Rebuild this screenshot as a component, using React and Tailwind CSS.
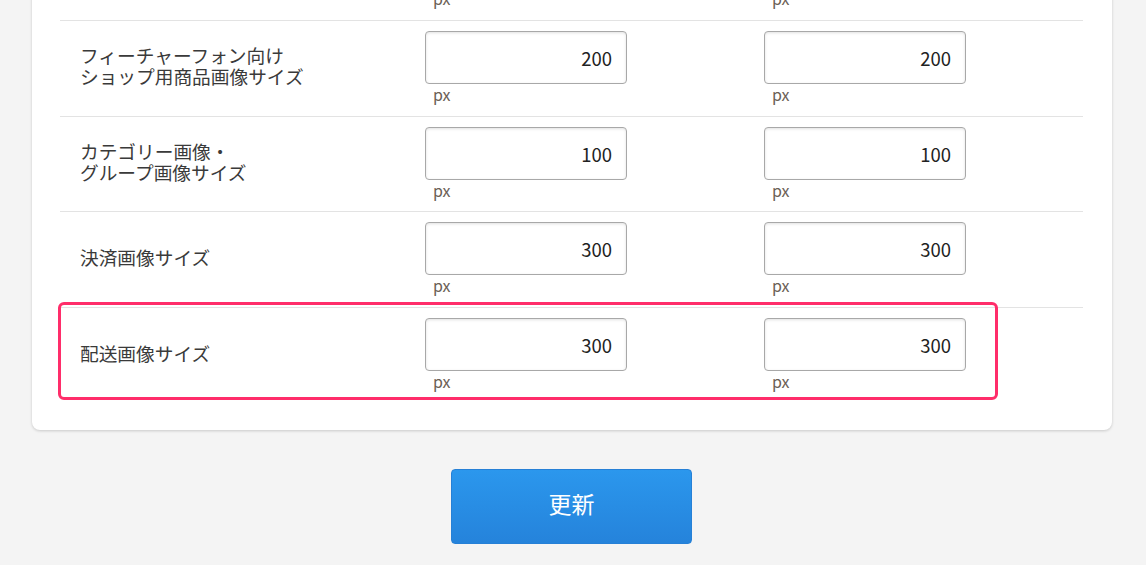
import React from 'react';

const rows = [
  { label: ['スマートフォン向け', 'ショップ用商品画像サイズ'], w: '300', h: '300' },
  { label: ['フィーチャーフォン向け', 'ショップ用商品画像サイズ'], w: '200', h: '200' },
  { label: ['カテゴリー画像・', 'グループ画像サイズ'], w: '100', h: '100', tight: true },
  { label: ['決済画像サイズ'], w: '300', h: '300' },
  { label: ['配送画像サイズ'], w: '300', h: '300', marked: true },
];

const SizeInput = ({ value }) => (
  <div className="flex flex-col">
    <input
      type="text"
      defaultValue={value}
      className="w-[202px] h-[53px] border border-[#a8a8a8] rounded-[4px] bg-white text-right pr-[14px] text-[18.5px] text-[#222] shadow-[inset_0_1px_3px_rgba(0,0,0,0.12)] outline-none"
    />
    <span className="pl-[8px] h-[20px] leading-[20px] text-[16px] text-[#6b6055]">px</span>
  </div>
);

const App = () => {
  return (
    <div
      className="w-full h-[565px] overflow-hidden bg-[#f4f4f4] text-[#333]"
      style={{ fontFamily: '"Noto Sans CJK JP", "Noto Sans", sans-serif' }}
    >
      <div className="mx-[32px] w-[1080px] -mt-[76px] bg-white rounded-b-[8px] shadow-[0_1px_3px_rgba(0,0,0,0.18)] pl-[28px] pr-[29px] pb-[27px]">
        {rows.map((row, i) => (
          <div
            key={i}
            className={`relative grid grid-cols-[365px_339px_1fr] border-t border-[#e3e3e3] pt-[10px] ${row.tight ? 'pb-[11px]' : 'pb-[12px]'}`}
          >
            <div className="flex flex-col justify-center pl-[20px] pb-[5px] text-[18.7px] leading-[21px] text-[#3a3a3a]">
              {row.label.map((line) => (
                <span key={line}>{line}</span>
              ))}
            </div>
            <SizeInput value={row.w} />
            <SizeInput value={row.h} />
            {row.marked && (
              <div className="absolute -left-[2px] -top-[6px] w-[940px] h-[98px] border-[3px] border-[#ff2d6a] rounded-[6px] pointer-events-none" />
            )}
          </div>
        ))}
      </div>
      <div className="flex justify-center mt-[39px] pr-[3px]">
        <button
          type="button"
          className="w-[241px] h-[75px] pb-[6px] rounded-[4px] border border-[#2680d6] bg-gradient-to-b from-[#2b97ed] to-[#2583db] text-white text-[23px]"
        >
          更新
        </button>
      </div>
    </div>
  );
};

export default App;
